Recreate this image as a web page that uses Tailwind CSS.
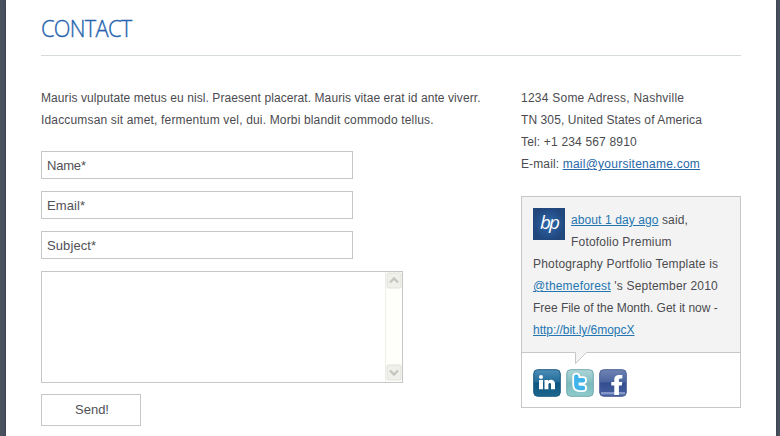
<!DOCTYPE html>
<html lang="en">
<head>
<meta charset="utf-8">
<title>Contact</title>
<script src="https://cdn.jsdelivr.net/npm/@tailwindcss/browser@4"></script>
</head>
<body class="h-[436px] overflow-hidden bg-[#4a5260] px-[6px] pr-[4px] font-['Liberation_Sans',Arial,sans-serif] text-[12px] leading-[22px] text-[#4b4b4f]">
<div class="h-[436px] bg-white pl-[35px] pr-[35px] shadow-[0_0_3px_#303947]">
  <header class="h-[56px] border-b border-[#d5dadd] pt-[12px]">
    <h1 class="origin-left scale-x-[0.91] font-['Open_Sans','Noto_Sans',sans-serif] text-[24px] font-light leading-[32px] tracking-[-0.8px] text-[#2463ae] [-webkit-text-stroke:0.35px_#2463ae]">CONTACT</h1>
  </header>
  <div class="flex pt-[31px]">
    <main class="w-[480px] shrink-0">
      <p class="whitespace-nowrap"><span class="block tracking-[0.08px]">Mauris vulputate metus eu nisl. Praesent placerat. Mauris vitae erat id ante viverr.</span><span class="block tracking-[0.16px]">Idaccumsan sit amet, fermentum vel, dui. Morbi blandit commodo tellus.</span></p>
      <form class="mt-[20px] flex flex-col items-start text-[13px] text-[#515156]">
        <div class="mb-3 h-[28px] w-[312px] border border-[#c6c7c9] px-[5px] leading-[27px] tracking-[-0.2px]">Name*</div>
        <div class="mb-3 h-[28px] w-[312px] border border-[#c6c7c9] px-[5px] leading-[27px] tracking-[0.1px]">Email*</div>
        <div class="mb-3 h-[28px] w-[312px] border border-[#c6c7c9] px-[5px] leading-[27px] tracking-[0.1px]">Subject*</div>
        <div class="mb-[11px] flex h-[112px] w-[362px] justify-end border border-[#c6c7c9]">
          <div class="flex w-[17px] flex-col justify-between border-l border-[#efefe9] bg-[#fefefa] pb-px">
            <svg class="h-[17px] w-[16px]" viewBox="0 0 16 17"><rect x="1" y="1" width="14" height="15" rx="1" fill="#f0f0eb" stroke="#e2e2dc"/><path d="M4 10.5 8 6.5l4 4" fill="none" stroke="#c6c6bf" stroke-width="2.4"/></svg>
            <svg class="h-[17px] w-[16px]" viewBox="0 0 16 17"><rect x="1" y="1" width="14" height="15" rx="1" fill="#f0f0eb" stroke="#e2e2dc"/><path d="m4 6.5 4 4 4-4" fill="none" stroke="#c6c6bf" stroke-width="2.4"/></svg>
          </div>
        </div>
        <div class="h-[32px] w-[100px] border border-[#c6c7c9] pl-[2px] text-center leading-[30px]">Send!</div>
      </form>
    </main>
    <aside class="w-[220px] shrink-0">
      <div class="whitespace-nowrap">
        <div class="tracking-[0.24px]">1234 Some Adress, Nashville</div>
        <div class="tracking-[0.09px]">TN 305, United States of America</div>
        <div class="tracking-[0.17px]">Tel: +1 234 567 8910</div>
        <div class="tracking-[0.25px]"><span class="tracking-[0.12px]">E-mail: </span><a class="text-[#2867aa] underline">mail@yoursitename.com</a></div>
      </div>
      <section class="mt-[21px] h-[212px] border border-[#c6c7c9]">
        <div class="h-[155px] bg-[#f3f3f3] pl-[11px] pt-[12px]">
          <div class="flex">
            <svg class="-mt-px mr-[6px] h-[32px] w-[32px] shrink-0" viewBox="0 0 32 32"><defs><radialGradient id="bp"><stop stop-color="#2e68ac"/><stop offset="1" stop-color="#21477d"/></radialGradient></defs><rect width="32" height="32" fill="url(#bp)"/><text x="7" y="20.5" font-family="Open Sans, Noto Sans, sans-serif" font-style="italic" font-size="19" letter-spacing="-2" fill="#fff">bp</text></svg>
            <div class="whitespace-nowrap"><div class="tracking-[0.1px]"><a class="text-[#2476b2] underline">about 1 day ago</a> said,</div><div class="tracking-[0.2px]">Fotofolio Premium</div></div>
          </div>
          <div class="whitespace-nowrap">
            <div class="tracking-[0.18px]">Photography Portfolio Template is</div>
            <div class="tracking-[0.19px]"><a class="text-[#2476b2] underline">@themeforest</a> 's September 2010</div>
            <div class="tracking-[-0.02px]">Free File of the Month. Get it now -</div>
            <div class="tracking-[-0.03px]"><a class="text-[#2476b2] underline">http://bit.ly/6mopcX</a></div>
          </div>
        </div>
        <div class="relative flex h-[55px] gap-[5px] border-t border-[#c6c7c9] pl-[11px] pt-[16px]">
          <svg class="absolute -top-px left-[53px] h-[13px] w-[12px]" viewBox="0 0 12 13"><path d="M.5 0v11.5L11.5.5V0Z" fill="#f3f3f3"/><path d="M.5.5v11L11.5.5" fill="none" stroke="#c6c7c9"/></svg>
          <svg class="h-[28px] w-[28px]" viewBox="0 0 28 28"><defs><linearGradient id="li" x2="0" y2="1"><stop stop-color="#4c8fb8"/><stop offset=".45" stop-color="#236b99"/><stop offset=".5" stop-color="#10557e"/><stop offset="1" stop-color="#1b678e"/></linearGradient></defs><rect x=".7" y=".7" width="26.6" height="26.6" rx="4" fill="url(#li)" stroke="#1c5c82"/><g fill="#fff"><circle cx="8" cy="7.9" r="2"/><path d="M6 11h4v9.2H6zM11.5 11h3.7v1.2c2-2.4 6.8-1.6 6.8 2.6v5.4h-4v-4.6c0-2.3-2.6-2-2.6 0v4.6h-3.9z"/></g></svg>
          <svg class="h-[28px] w-[28px]" viewBox="0 0 28 28"><defs><linearGradient id="tw" x2="0" y2="1"><stop stop-color="#aed5d7"/><stop offset=".45" stop-color="#86c0c3"/><stop offset=".5" stop-color="#79b9bc"/><stop offset="1" stop-color="#91cbcd"/></linearGradient></defs><rect x=".7" y=".7" width="26.6" height="26.6" rx="4" fill="url(#tw)" stroke="#71a9ad"/><path d="M10.3 7.7v7.8c0 2.4 1.3 3.5 3.7 3.5h3M10.3 11.3H17" fill="none" stroke="#fff" stroke-width="8" stroke-linecap="round" stroke-linejoin="round"/><path d="M10.3 7.7v7.8c0 2.4 1.3 3.5 3.7 3.5h3M10.3 11.3H17" fill="none" stroke="#3fb4ea" stroke-width="4.4" stroke-linecap="round" stroke-linejoin="round"/></svg>
          <svg class="h-[28px] w-[28px]" viewBox="0 0 28 28"><defs><linearGradient id="fb" x2="0" y2="1"><stop stop-color="#7083b3"/><stop offset=".45" stop-color="#4c659f"/><stop offset=".5" stop-color="#334e90"/><stop offset="1" stop-color="#465fa0"/></linearGradient></defs><rect x=".7" y=".7" width="26.6" height="26.6" rx="4" fill="url(#fb)" stroke="#4b5f94"/><path d="M2 23h24v2.5H2z" fill="#8398c8"/><path d="M15.3 26V16.6h-3V13h3v-2.2c0-3.7 2.2-4.8 5.2-4.8h2.8v3.5h-1.6c-1.3 0-1.8.5-1.8 1.8V13h3.4l-.5 3.6h-2.9V26z" fill="#fff"/></svg>
        </div>
      </section>
    </aside>
  </div>
</div>
</body>
</html>
